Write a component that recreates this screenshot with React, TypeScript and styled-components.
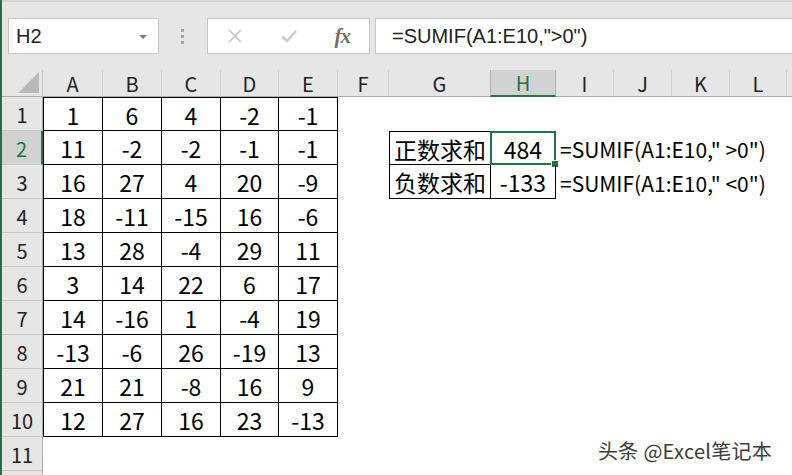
import React from 'react'
import styled, { createGlobalStyle, css } from 'styled-components'

const GREEN = '#217346'
const SHEET_FONT = `'Noto Sans CJK SC', 'Noto Sans', sans-serif`

// last column is only a sliver at the window edge, so it gets no label
const columns = [
  { name: 'A', width: 60 },
  { name: 'B', width: 59 },
  { name: 'C', width: 59 },
  { name: 'D', width: 58 },
  { name: 'E', width: 59 },
  { name: 'F', width: 51 },
  { name: 'G', width: 102 },
  { name: 'H', width: 65 },
  { name: 'I', width: 58 },
  { name: 'J', width: 58 },
  { name: 'K', width: 58 },
  { name: 'L', width: 57 },
  { name: '', width: 58 },
]

const numbers = [
  [1, 6, 4, -2, -1],
  [11, -2, -2, -1, -1],
  [16, 27, 4, 20, -9],
  [18, -11, -15, 16, -6],
  [13, 28, -4, 29, 11],
  [3, 14, 22, 6, 17],
  [14, -16, 1, -4, 19],
  [-13, -6, 26, -19, 13],
  [21, 21, -8, 16, 9],
  [12, 27, 16, 23, -13],
]

const summary: Record<number, string[]> = {
  2: ['正数求和', '484', '=SUMIF(A1:E10," >0")'],
  3: ['负数求和', '-133', '=SUMIF(A1:E10," <0")'],
}

// rows 1..11 are labelled, row 12 only peeks in at the bottom
const ROWS = 12
const LABELLED_ROWS = 11

const isBoxed = (r: number, c: number) =>
  (r >= 1 && r <= 10 && c >= 0 && c <= 4) || (r >= 2 && r <= 3 && (c === 6 || c === 7))

const cellText = (r: number, c: number): string => {
  if (r >= 1 && r <= 10 && c <= 4) return String(numbers[r - 1][c])
  const s = summary[r]
  if (s && c >= 6 && c <= 8) return s[c - 6]
  return ''
}

const GlobalStyle = createGlobalStyle`
  html, body {
    margin: 0;
    padding: 0;
    background: #fff;
    overflow: hidden;
  }
`

const App: React.FC = () => {
  return (
    <>
      <GlobalStyle />
      <Window>
        <TopEdge />
        <FormulaBar>
          <NameBox>
            <span>H2</span>
            <DropArrow />
          </NameBox>
          <Grip>
            <i />
            <i />
            <i />
          </Grip>
          <FxBox>
            <FxSlot>
              <svg width='16' height='16' viewBox='0 0 16 16'>
                <path d='M2 2 L14 14 M14 2 L2 14' stroke='#c3c3c3' strokeWidth='1.6' fill='none' />
              </svg>
            </FxSlot>
            <FxSlot>
              <svg width='18' height='16' viewBox='0 0 18 16'>
                <path d='M2 8.5 L7 13 L16 3' stroke='#cbcbcb' strokeWidth='2.6' fill='none' />
              </svg>
            </FxSlot>
            <FxSlot>
              <FxText>fx</FxText>
            </FxSlot>
          </FxBox>
          <FormulaInput>=SUMIF(A1:E10,"&gt;0")</FormulaInput>
        </FormulaBar>

        <Sheet $cols={columns.map((c) => c.width)}>
          <Corner>
            <svg width='21' height='21' viewBox='0 0 21 21'>
              <path d='M21 0 L21 21 L0 21 Z' fill='#b9b9b9' />
            </svg>
          </Corner>
          {columns.map((col, c) => (
            <ColHeader key={c} $active={col.name === 'H'}>
              {col.name}
            </ColHeader>
          ))}
          {Array.from({ length: ROWS }, (_, i) => i + 1).map((r) => (
            <React.Fragment key={r}>
              <RowHeader $active={r === 2}>{r <= LABELLED_ROWS ? r : ''}</RowHeader>
              {columns.map((_, c) => {
                const boxed = isBoxed(r, c)
                return (
                  <Cell
                    key={c}
                    $boxed={boxed}
                    $openLeft={boxed && !isBoxed(r, c - 1)}
                    $openTop={boxed && !isBoxed(r - 1, c)}
                    $formula={c === 8}
                  >
                    {cellText(r, c)}
                    {r === 2 && c === 7 && (
                      <Selection>
                        <Handle />
                      </Selection>
                    )}
                  </Cell>
                )
              })}
            </React.Fragment>
          ))}
        </Sheet>

        <Watermark>头条 @Excel笔记本</Watermark>
      </Window>
    </>
  )
}

export default App

const Window = styled.div`
  position: relative;
  width: 792px;
  height: 475px;
  overflow: hidden;
  box-sizing: border-box;
  border-left: 2px solid ${GREEN};
  background: #e6e6e6;
`

const TopEdge = styled.div`
  height: 2px;
  background: #d6d6d6;
`

const FormulaBar = styled.div`
  display: flex;
  align-items: stretch;
  height: 36px;
  padding: 16px 0 0 6px;
  margin-bottom: 16px;
`

const boxBase = css`
  box-sizing: border-box;
  background: #fff;
  border: 1px solid #c6c6c6;
`

const NameBox = styled.div`
  ${boxBase};
  width: 151px;
  display: flex;
  align-items: center;
  justify-content: space-between;
  padding: 1px 11px 0 7px;
  font-family: 'Liberation Sans', Arial, sans-serif;
  font-size: 20px;
  color: #222;
`

const DropArrow = styled.span`
  width: 0;
  height: 0;
  border-left: 4px solid transparent;
  border-right: 4px solid transparent;
  border-top: 4px solid #7b7b7b;
`

const Grip = styled.div`
  width: 46px;
  display: flex;
  flex-direction: column;
  align-items: center;
  justify-content: center;
  gap: 3px;
  padding-right: 2px;

  i {
    display: block;
    width: 3px;
    height: 3px;
    background: #a6a6a6;
  }
`

const FxBox = styled.div`
  ${boxBase};
  width: 163px;
  display: flex;
  align-items: center;
`

const FxSlot = styled.div`
  flex: 1;
  display: flex;
  align-items: center;
  justify-content: center;
  height: 100%;
`

const FxText = styled.span`
  font-family: 'Liberation Serif', 'DejaVu Serif', serif;
  font-style: italic;
  font-weight: bold;
  font-size: 21px;
  color: #707070;
  letter-spacing: -1px;
`

const FormulaInput = styled.div`
  ${boxBase};
  flex: 1;
  margin-left: 5px;
  border-right: none;
  display: flex;
  align-items: center;
  padding: 1px 0 0 16px;
  font-family: 'Liberation Sans', Arial, sans-serif;
  font-size: 20px;
  color: #222;
  white-space: nowrap;
`

const Sheet = styled.div<{ $cols: number[] }>`
  display: grid;
  grid-template-columns: 41px ${({ $cols }) => $cols.map((w) => `${w}px`).join(' ')};
  grid-template-rows: 27px;
  grid-auto-rows: 34px;
  background: #fff;
  font-family: ${SHEET_FONT};
`

const Corner = styled.div`
  box-sizing: border-box;
  background: #e6e6e6;
  border-right: 1px solid #c8c8c8;
  border-bottom: 1px solid #ababab;
  display: flex;
  align-items: flex-end;
  justify-content: flex-end;
  padding: 0 3px 3px 0;
`

const ColHeader = styled.div<{ $active?: boolean }>`
  box-sizing: border-box;
  display: flex;
  align-items: center;
  justify-content: center;
  padding-top: 1px;
  font-size: 20px;
  line-height: 1;
  background: #e6e6e6;
  color: #222;
  border-right: 1px solid #d2d2d2;
  border-bottom: 1px solid #ababab;

  ${({ $active }) =>
    $active &&
    css`
      background: #d2d2d2;
      color: ${GREEN};
      border-left: 1px solid #b0b0b0;
      border-right: 1px solid #b0b0b0;
      border-bottom: 2px solid ${GREEN};
      margin-left: -1px;
    `}
`

const RowHeader = styled.div<{ $active?: boolean }>`
  box-sizing: border-box;
  display: flex;
  align-items: center;
  justify-content: center;
  padding-top: 2px;
  font-size: 20px;
  line-height: 1;
  background: #e6e6e6;
  color: #222;
  border-right: 1px solid #ababab;
  border-bottom: 1px solid #c8c8c8;

  ${({ $active }) =>
    $active &&
    css`
      background: #d2d2d2;
      color: ${GREEN};
      border-right: 2px solid ${GREEN};
    `}
`

const Cell = styled.div<{
  $boxed: boolean
  $openLeft: boolean
  $openTop: boolean
  $formula?: boolean
}>`
  position: relative;
  box-sizing: border-box;
  display: flex;
  align-items: center;
  justify-content: center;
  padding-top: 2px;
  font-size: 23px;
  line-height: 1;
  color: #000;
  white-space: nowrap;

  ${({ $boxed }) =>
    $boxed &&
    css`
      border-right: 1px solid #000;
      border-bottom: 1px solid #000;
    `}
  ${({ $openLeft }) => $openLeft && 'border-left: 1px solid #000;'}
  ${({ $openTop }) => $openTop && 'border-top: 1px solid #000;'}
  ${({ $formula }) =>
    $formula &&
    css`
      justify-content: flex-start;
      padding-left: 4px;
      font-size: 21px;
      overflow: visible;
    `}
`

const Selection = styled.div`
  position: absolute;
  inset: -1px -1px -1px -1px;
  border: 2px solid ${GREEN};
  pointer-events: none;
`

const Handle = styled.div`
  position: absolute;
  right: -5px;
  bottom: -5px;
  width: 6px;
  height: 6px;
  background: ${GREEN};
  border: 1px solid #fff;
`

const Watermark = styled.div`
  position: absolute;
  left: 596px;
  top: 436px;
  font-family: ${SHEET_FONT};
  font-size: 20px;
  color: #3c3c3c;
  text-shadow: 0 0 2px #fff, 0 0 3px #fff;
  letter-spacing: 0.3px;
`
